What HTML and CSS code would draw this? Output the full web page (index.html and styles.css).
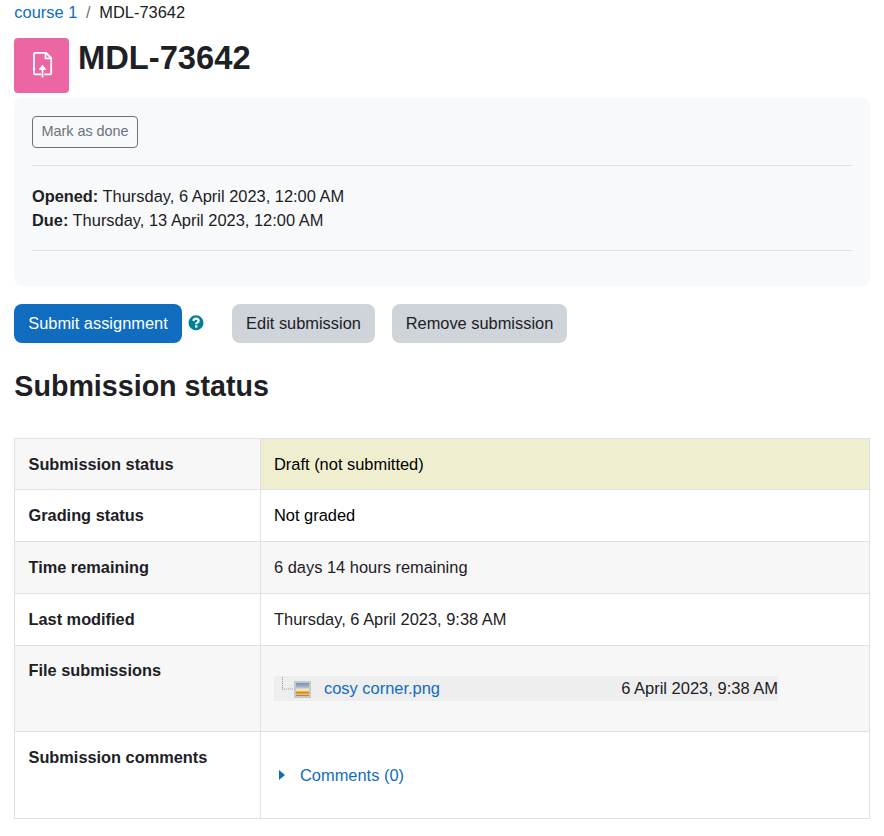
FILE: index.html
```html
<!DOCTYPE html>
<html lang="en">
<head>
<meta charset="utf-8">
<title>MDL-73642</title>
<link rel="stylesheet" href="styles.css">
</head>
<body>
<nav class="breadcrumb"><a href="#">course 1</a><span class="divider">/</span><span>MDL-73642</span></nav>
<header class="page-header">
  <div class="activity-icon">
    <svg width="20" height="27" viewBox="0 0 20 27" fill="none" stroke="#fff" stroke-width="1.8" stroke-linejoin="round">
      <path d="M8 23.3H2.2Q1 23.3 1 22.2V3Q1 1.8 2.2 1.8H13L18.2 7V22.2Q18.2 23.3 17 23.3H11.4"/>
      <path d="M12.5 2V7.4H18"/>
      <path d="M9.5 26.5V17"/>
      <path d="M9.5 14.2L12.6 18.4H6.4Z" fill="#fff" stroke-width="1"/>
    </svg>
  </div>
  <h1>MDL-73642</h1>
</header>
<section class="info">
  <button class="btn-done">Mark as done</button>
  <div class="dates">
    <div><strong>Opened:</strong> Thursday, 6 April 2023, 12:00 AM</div>
    <div><strong>Due:</strong> Thursday, 13 April 2023, 12:00 AM</div>
  </div>
</section>
<div class="actions">
  <button class="btn btn-primary">Submit assignment</button>
  <svg class="help" width="16" height="16" viewBox="0 0 16 16">
    <circle cx="8" cy="7.7" r="7.5" fill="#008196"/>
    <path d="M5.3 5.9Q5.9 3.7 8 3.7Q10.6 3.8 10.6 5.8Q10.6 7 9.2 7.7Q8.2 8.2 8.2 9.3" fill="none" stroke="#fff" stroke-width="2.3"/>
    <rect x="7" y="10.3" width="2.4" height="2.3" fill="#fff"/>
  </svg>
  <button class="btn btn-edit">Edit submission</button>
  <button class="btn btn-remove">Remove submission</button>
</div>
<h2>Submission status</h2>
<table class="status">
  <tr class="first"><th>Submission status</th><td class="draft">Draft (not submitted)</td></tr>
  <tr><th>Grading status</th><td class="plain">Not graded</td></tr>
  <tr><th>Time remaining</th><td>6 days 14 hours remaining</td></tr>
  <tr><th>Last modified</th><td>Thursday, 6 April 2023, 9:38 AM</td></tr>
  <tr class="files"><th>File submissions</th><td>
    <div class="file">
      <svg class="tree" width="38" height="25" viewBox="0 0 38 25">
        <defs><linearGradient id="sky" x1="0" y1="0" x2="0" y2="1">
          <stop offset="0" stop-color="#7192bd"/><stop offset=".3" stop-color="#a3b5c8"/><stop offset=".5" stop-color="#f3e8cf"/><stop offset=".62" stop-color="#fbd27a"/><stop offset=".74" stop-color="#c98210"/><stop offset=".84" stop-color="#f5b840"/><stop offset=".92" stop-color="#e8c890"/><stop offset="1" stop-color="#514c4c"/>
        </linearGradient></defs>
        <path d="M8.5 1V14M8 13H20" fill="none" stroke="#a4a4a4" stroke-dasharray="1.1 .9"/>
        <rect x="20" y="5" width="17" height="17" fill="#c8c8c8"/>
        <rect x="22" y="7" width="13" height="13" fill="url(#sky)"/>
      </svg>
      <a href="#">cosy corner.png</a>
      <span class="file-date">6 April 2023, 9:38 AM</span>
    </div>
  </td></tr>
  <tr class="comments"><th>Submission comments</th><td>
    <a class="toggle" href="#"><svg width="6" height="10" viewBox="0 0 6 10"><path d="M0 0L6 5L0 10Z" fill="#0f6cbf"/></svg>Comments (0)</a>
  </td></tr>
</table>
</body>
</html>
```
FILE: styles.css
```css
* { box-sizing: border-box; }
html { overflow: hidden; }
body {
  margin: 0;
  padding: 0 14px;
  background: #fff;
  color: #1d2125;
  font: 16.43px/24.75px "Liberation Sans", Arial, sans-serif;
}
a { color: #0f6cbf; text-decoration: none; }
h1, h2 { margin: 0; font-weight: 700; }
button { font-family: inherit; margin: 0; }
.breadcrumb { height: 38px; padding-left: 0.3px; }
.divider { padding: 0 8.7px; color: #6a737b; }
.page-header { display: flex; height: 60px; }
.activity-icon {
  width: 55px;
  height: 55px;
  padding: 13px 0 0 19px;
  border-radius: 4px;
  background: #eb66a2;
}
h1 { margin-left: 9px; font-size: 32.7px; line-height: 40px; }
.info {
  height: 188px;
  padding: 18px;
  border-radius: 8px;
  background: #f8f9fa;
}
.btn-done {
  display: block;
  width: 106px;
  height: 32px;
  padding: 0 0 2px;
  border: 1px solid #6a737b;
  border-radius: 4px;
  background: transparent;
  color: #6a737b;
  font-size: 14.4px;
}
.dates {
  height: 86px;
  margin-top: 17px;
  padding-top: 18px;
  border: solid #dee2e6;
  border-width: 1px 0;
  line-height: 24px;
}
strong { font-size: 16.35px; }
.actions { display: flex; height: 39px; margin-top: 18px; }
.btn {
  height: 39px;
  padding: 0;
  border: 0;
  border-radius: 8px;
  background: #ced4da;
  color: #1d2125;
  font-size: 16.4px;
}
.btn-primary { width: 168px; background: #0f6cbf; color: #fff; }
.help { margin: 11px 28px 0 6px; }
.btn-edit { width: 143px; margin-right: 17px; }
.btn-remove { width: 175px; }
h2 { height: 95px; padding: 26px 0 0 0.3px; font-size: 28.65px; line-height: 35px; }
.status {
  width: 856px;
  table-layout: fixed;
  border-collapse: collapse;
}
.status tr { height: 52px; }
.status .first { height: 51px; }
.status tr:nth-child(odd) { background: #f7f7f7; }
.status th, .status td {
  padding: 13px 13px 0;
  border: 1px solid #dee2e6;
  text-align: left;
  vertical-align: top;
}
.status th { width: 246px; padding-left: 13.5px; font-size: 16.33px; }
.status .draft { background: #efefcf; color: #000; }
.status .plain { color: #000; }
.status .files { height: 86px; }
.status .comments { height: 87px; }
.status .files th { padding-top: 12px; }
.status .files td { padding-top: 30px; }
.file {
  display: flex;
  width: 504px;
  height: 25px;
  background: #eee;
}
.tree { margin-right: 12px; }
.file-date { margin-left: auto; font-size: 16.5px; }
.status .comments td { padding-top: 31px; }
.toggle { display: flex; align-items: center; padding-left: 5px; }
.toggle svg { margin-right: 15px; }
```
